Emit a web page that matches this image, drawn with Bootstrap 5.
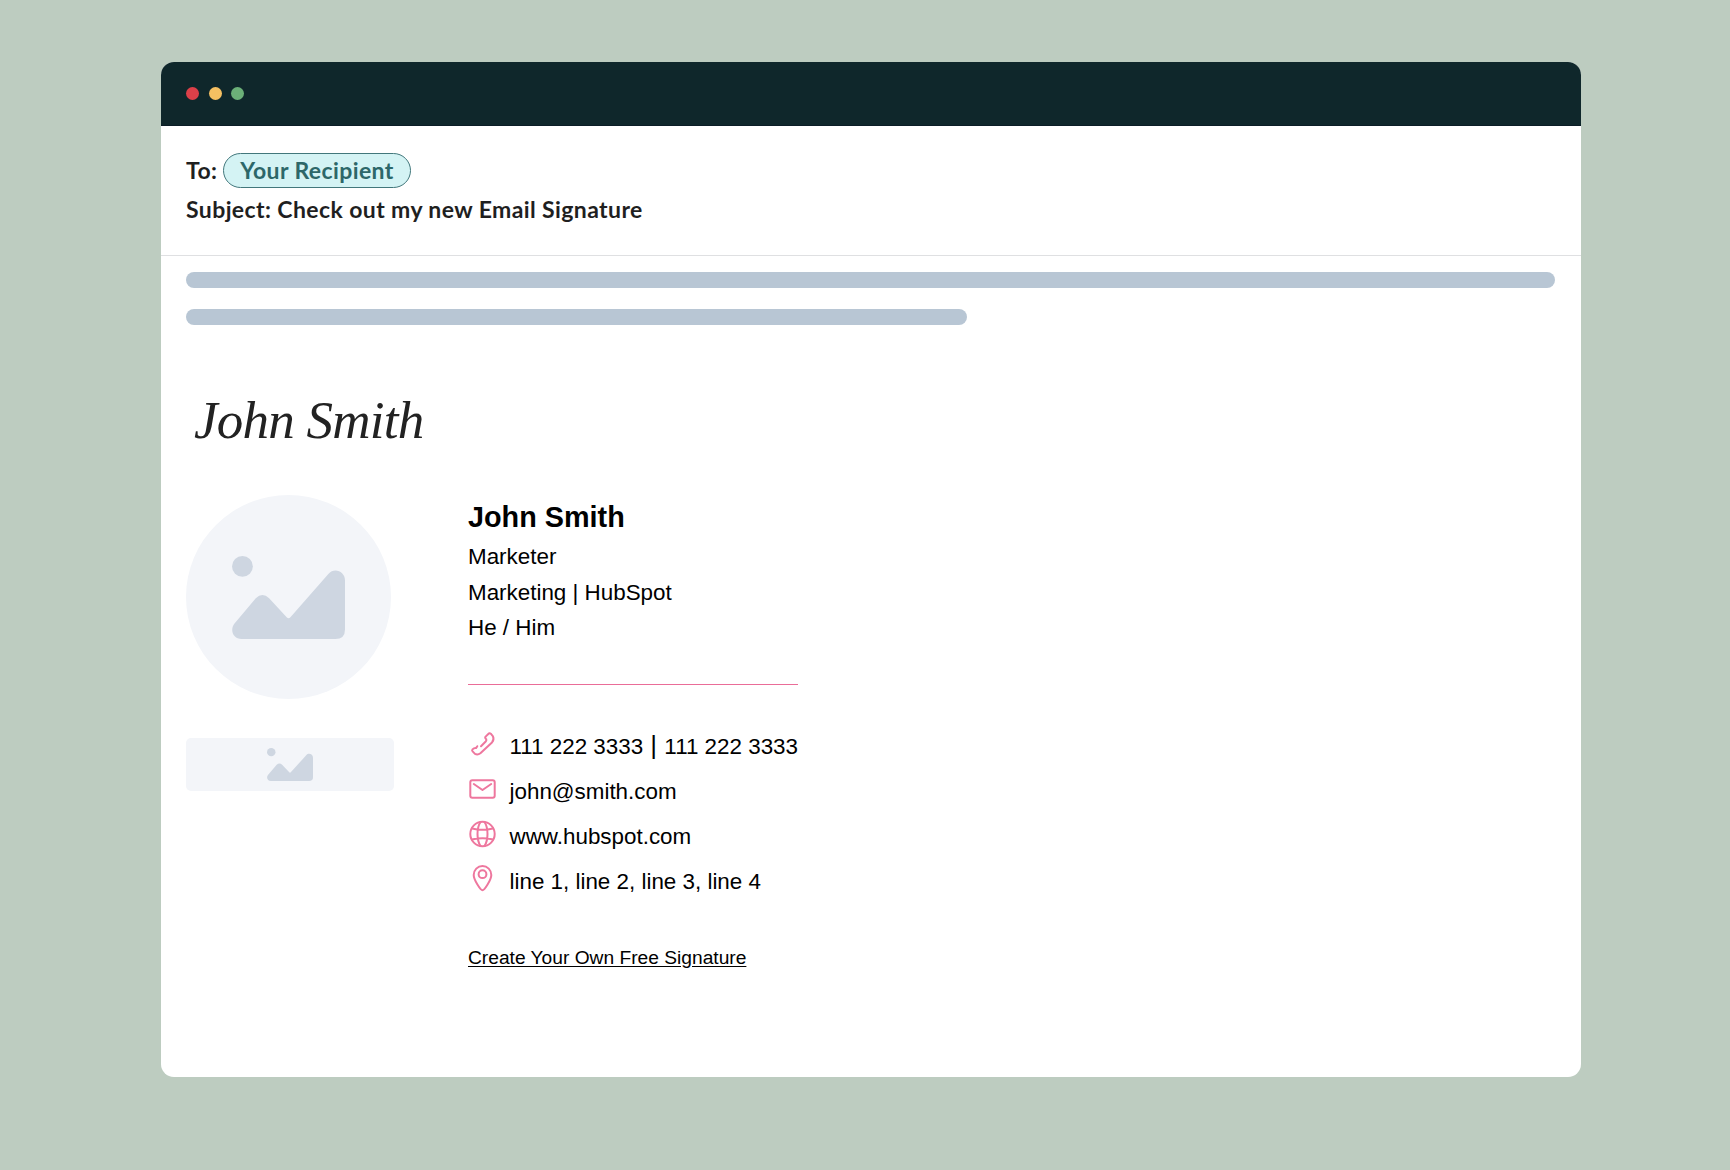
<!DOCTYPE html>
<html lang="en">
<head>
<meta charset="utf-8">
<meta name="viewport" content="width=device-width, initial-scale=1">
<title>Email Signature Preview</title>
<link rel="stylesheet" href="https://cdn.jsdelivr.net/npm/bootstrap@5.3.0/dist/css/bootstrap.min.css">
<style>
  body { background: #bdccc0; min-height: 1170px; padding: 62px 149px 0 161px; color: #000; font-family: "Liberation Sans", Arial, sans-serif; }
  .mail-window { width: 1420px; height: 1015px; border-radius: 13px; background: #fff; }
  .title-bar { height: 64px; background: #0f272b; border-bottom: 1px solid #0b1d27; padding: 0 25px; gap: 9.5px; }
  .dot { width: 13px; height: 13px; }
  .dot-red { background: #dc4049; } .dot-yellow { background: #f5c062; } .dot-green { background: #6bb078; }
  .mail-head { height: 130px; padding: 27px 25px 0; border-bottom: 1px solid #dfe0e2; font: 700 23px/35px Lato, sans-serif; letter-spacing: .4px; color: #1f1f1f; }
  .to-label { width: 37px; }
  .recipient { height: 35px; line-height: 33px; width: 188px; border: 1px solid #42777b; background: #d4f3f4; color: #2d6769; }
  .subject-line { line-height: 36px; margin-top: 3px; }
  .mail-body { padding: 16px 25px 0; }
  .text-bar { height: 16px; width: 1369px; background: #b8c6d4; }
  .text-bar + .text-bar { width: 781px; margin-top: 21px; }
  .script-name { height: 170px; padding: 55px 0 0 8px; font: italic 400 53px/80px "Liberation Serif", serif; color: #222; letter-spacing: -.75px; }
  .photo { width: 205px; height: 204px; background: #f3f5f9; }
  .logo-box { width: 208px; height: 53px; border-radius: 5px; margin-top: 39px; padding-bottom: 1px; background: #f3f5f9; }
  .side { width: 282px; }
  .details { width: 330px; font-size: 22.4px; line-height: 35.7px; }
  .full-name { font-size: 28.8px; line-height: 43px; padding-top: 1px; }
  .rule { height: 1px; margin-top: 38px; background: #ea6d98; }
  .contacts { margin-top: 40px; }
  .contact-row { height: 44.8px; line-height: 44.8px; }
  .contact-row:last-child { height: 43px; line-height: 43px; }
  .contact-row svg { width: 28px; height: 28px; margin: 0 13.5px 7px 0; fill: none; stroke: #ee779e; stroke-width: 2; stroke-linecap: round; stroke-linejoin: round; }
  .sep { font-size: 26px; line-height: 1; }
  .create-link { font-size: 19.2px; line-height: 30px; margin-top: 40.8px; color: #000; text-underline-offset: 2px; }
</style>
<script src="https://cdn.jsdelivr.net/npm/bootstrap@5.3.0/dist/js/bootstrap.bundle.min.js"></script>
</head>
<body>
<svg class="d-none"><symbol id="picture" viewBox="0 0 112.6 83" preserveAspectRatio="none">
  <circle cx="10.4" cy="10.4" r="10.4"/>
  <path d="M2.3 67.8 23.7 42.2Q30.3 36 37 42.2L54.5 61.3Q56.3 63.2 58.2 61.3L96 18C102 11 112.6 15.500 112.600 24.500V73.500Q112.600 83 103 83H9.500C1.500 83-2.500 74.500 2.300 67.800Z"/>
</symbol></svg>
<main class="mail-window overflow-hidden">
  <header class="title-bar d-flex align-items-center">
    <span class="dot dot-red rounded-circle"></span><span class="dot dot-yellow rounded-circle"></span><span class="dot dot-green rounded-circle"></span>
  </header>
  <section class="mail-head">
    <div class="d-flex"><span class="to-label">To:</span><span class="recipient rounded-pill text-center">Your Recipient</span></div>
    <div class="subject-line text-nowrap">Subject: Check out my new Email Signature</div>
  </section>
  <section class="mail-body">
    <div class="text-bar rounded-pill"></div>
    <div class="text-bar rounded-pill"></div>
    <div class="script-name text-nowrap">John Smith</div>
    <div class="d-flex">
      <div class="side flex-shrink-0">
        <div class="photo rounded-circle d-flex justify-content-center align-items-center">
          <svg width="113" height="83" fill="#ced6e1"><use href="#picture"/></svg>
        </div>
        <div class="logo-box d-flex justify-content-center align-items-center">
          <svg width="46" height="33" fill="#ced6e1"><use href="#picture"/></svg>
        </div>
      </div>
      <div class="details text-nowrap">
        <div class="full-name fw-bold">John Smith</div>
        <div>Marketer</div>
        <div>Marketing | HubSpot</div>
        <div>He / Him</div>
        <div class="rule"></div>
        <div class="contacts">
          <div class="contact-row d-flex align-items-center">
            <svg viewBox="0 0 28 28"><path d="M9.300 16.200 8 18.100Q6 17.900 4.500 19.400Q3.700 20.400 4.600 21.400L7 23.900Q9.700 25.300 12.400 23.300L24 12.400Q26.400 9.500 25 6.300L22.800 3.700Q21.500 2.500 20.300 4L17.600 6.600Q16.600 8 18.300 9.300Q18.600 10.500 17.700 11.500L13 16.300"/></svg>
            <span>111 222 3333<span class="sep"> | </span>111 222 3333</span>
          </div>
          <div class="contact-row d-flex align-items-center">
            <svg viewBox="0 0 28 28"><rect x="2.300" y="5.200" width="24.400" height="17.600" rx="2"/><path d="m5.800 9 8.700 6 8.700-6"/></svg>
            <span>john@smith.com</span>
          </div>
          <div class="contact-row d-flex align-items-center">
            <svg viewBox="0 0 28 28"><circle cx="14.500" cy="14" r="12.200"/><path d="M12.500 2C8.500 8 8.500 20 12.500 26M16.500 2C20.500 8 20.500 20 16.500 26M4 8.500Q14.500 11 25 8.500M4 19.500Q14.500 17 25 19.500"/></svg>
            <span>www.hubspot.com</span>
          </div>
          <div class="contact-row d-flex align-items-center">
            <svg viewBox="0 0 28 28"><path d="M14.500 26.300C12.700 26.300 5.700 16 5.700 11A8.800 9 0 0 1 23.300 11C23.300 16 16.300 26.300 14.500 26.300Z"/><circle cx="14.500" cy="10.200" r="3.900"/></svg>
            <span>line 1, line 2, line 3, line 4</span>
          </div>
        </div>
        <a class="create-link d-inline-block" href="#">Create Your Own Free Signature</a>
      </div>
    </div>
  </section>
</main>
</body>
</html>
